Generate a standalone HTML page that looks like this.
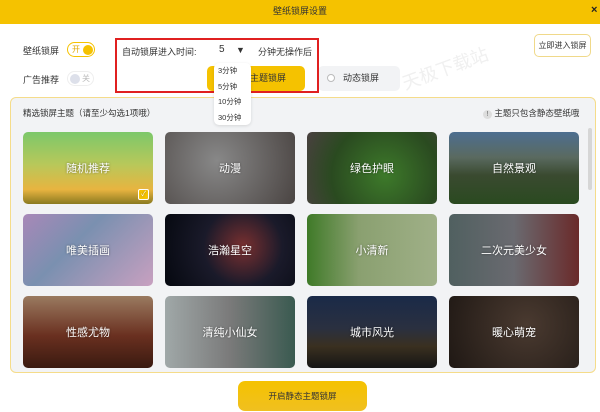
<!DOCTYPE html>
<html><head><meta charset="utf-8"><style>
*{margin:0;padding:0;box-sizing:border-box}
body{width:600px;height:412px;background:#fff;position:relative;overflow:hidden;font-family:"Liberation Sans","Noto Sans CJK SC",sans-serif;font-size:9px;color:#333}
.a{position:absolute}
.card{position:absolute;width:130px;height:72px;border-radius:5px;overflow:hidden;color:#fff;font-size:11px;display:flex;align-items:center;justify-content:center;text-shadow:0 0 2px rgba(0,0,0,.5)}
</style></head><body>
<div class="a" style="left:0;top:0;width:600px;height:24px;background:#f5c200;text-align:center;line-height:23px;font-size:9px;color:#333">壁纸锁屏设置</div>
<div class="a" style="left:591px;top:4px;font-size:11px;font-weight:bold;color:#222">×</div>
<div class="a" style="left:400px;top:55px;font-size:18px;color:#f0f0f0;transform:rotate(-20deg)">天极下载站</div>

<div class="a" style="left:23px;top:44px">壁纸锁屏</div>
<div class="a" style="left:67px;top:42px;width:28px;height:15px;border:1px solid #f5c200;border-radius:8px"><span class="a" style="left:4px;top:1px;color:#e0a800;font-size:8px">开</span><span class="a" style="left:15px;top:2px;width:10px;height:10px;border-radius:50%;background:#f5c200"></span></div>
<div class="a" style="left:23px;top:73px">广告推荐</div>
<div class="a" style="left:67px;top:71px;width:27px;height:15px;border:1px solid #eee;border-radius:8px"><span class="a" style="left:2px;top:2px;width:10px;height:10px;border-radius:50%;background:#dde0ea"></span><span class="a" style="left:14px;top:1px;color:#bbb;font-size:8px">关</span></div>

<div class="a" style="left:207px;top:66px;width:98px;height:25px;background:#f5c200;border-radius:5px;line-height:25px;padding-left:43px">主题锁屏</div>
<div class="a" style="left:318px;top:66px;width:82px;height:25px;background:#f2f3f5;border-radius:5px;line-height:25px;padding-left:25px">动态锁屏<span class="a" style="left:9px;top:8px;width:8px;height:8px;border:1px solid #bbb;border-radius:50%;background:#fff"></span></div>

<div class="a" style="left:115px;top:38px;width:204px;height:55px;border:2px solid #e02020"></div>
<div class="a" style="left:122px;top:45px">自动锁屏进入时间:</div>
<div class="a" style="left:213px;top:40px;width:38px;height:20px;background:#fff;border-radius:4px;font-size:10px;line-height:20px;padding-left:6px">5 <span style="position:absolute;left:23px;font-size:9px">▼</span></div>
<div class="a" style="left:258px;top:45px">分钟无操作后</div>
<div class="a" style="left:214px;top:63px;width:37px;height:62px;background:#fff;border-radius:5px;box-shadow:0 1px 3px rgba(0,0,0,.12);font-size:7.5px;line-height:15.5px;padding-left:4px;z-index:3">3分钟<br>5分钟<br>10分钟<br>30分钟</div>
<div class="a" style="left:534px;top:34px;width:57px;height:23px;border:1px solid #f0d98a;border-radius:5px;text-align:center;line-height:21px;font-size:8px">立即进入锁屏</div>

<div class="a" style="left:10px;top:97px;width:586px;height:276px;background:#f2f3f5;border:1px solid #f5dc8a;border-radius:6px"></div>
<div class="a" style="left:23px;top:107px;font-size:8.5px">精选锁屏主题（请至少勾选1项哦）</div>
<div class="a" style="left:483px;top:107px;font-size:8.5px"><span style="display:inline-block;width:9px;height:9px;border-radius:50%;background:#ddd;text-align:center;font-size:7px;line-height:9px;color:#666">!</span> 主题只包含静态壁纸哦</div>
<div class="a" style="left:588px;top:128px;width:4px;height:62px;background:#d6d6d6;border-radius:2px"></div>

<div class="card" style="left:23px;top:132px;background:linear-gradient(#7cc86a,#b8c85a 45%,#e8b440 80%,#8a7a20)">随机推荐<span class="a" style="right:4px;bottom:4px;width:11px;height:11px;border:1px solid #fff;border-radius:2px;background:#f5c200;font-size:7px;line-height:10px;text-align:center">✓</span></div>
<div class="card" style="left:165px;top:132px;background:radial-gradient(circle at 40% 40%,#888,#4a4442)">动漫</div>
<div class="card" style="left:307px;top:132px;background:radial-gradient(circle at 60% 60%,#3d7a2a,#2a4a20 60%,#4a4040)">绿色护眼</div>
<div class="card" style="left:449px;top:132px;background:linear-gradient(#4d6e90,#5a6a60 35%,#3a4a30 60%,#2a4a20)">自然景观</div>

<div class="card" style="left:23px;top:214px;background:linear-gradient(135deg,#a888b8,#7a90b0 40%,#c8a0c0)">唯美插画</div>
<div class="card" style="left:165px;top:214px;background:radial-gradient(circle at 60% 45%,#7a3030,#1a1a2a 45%,#05080f)">浩瀚星空</div>
<div class="card" style="left:307px;top:214px;background:linear-gradient(90deg,#3f7a28,#8aa070 40%,#a0b088)">小清新</div>
<div class="card" style="left:449px;top:214px;background:linear-gradient(90deg,#506060,#6a6a70 50%,#6a2a2a)">二次元美少女</div>

<div class="card" style="left:23px;top:296px;background:linear-gradient(#9a7a60,#6a3020 55%,#3a1a10)">性感尤物</div>
<div class="card" style="left:165px;top:296px;background:linear-gradient(90deg,#a0a8a8,#7a7a7a 50%,#3a5a50)">清纯小仙女</div>
<div class="card" style="left:307px;top:296px;background:linear-gradient(#1a2a48,#2a3040 45%,#3a3020 70%,#151515)">城市风光</div>
<div class="card" style="left:449px;top:296px;background:radial-gradient(circle at 60% 40%,#4a3a30,#1f1814)">暖心萌宠</div>

<div class="a" style="left:238px;top:381px;width:129px;height:30px;background:linear-gradient(#f5c200,#f0c020);border-radius:7px;text-align:center;line-height:30px;font-size:8.5px">开启静态主题锁屏</div>
</body></html>
